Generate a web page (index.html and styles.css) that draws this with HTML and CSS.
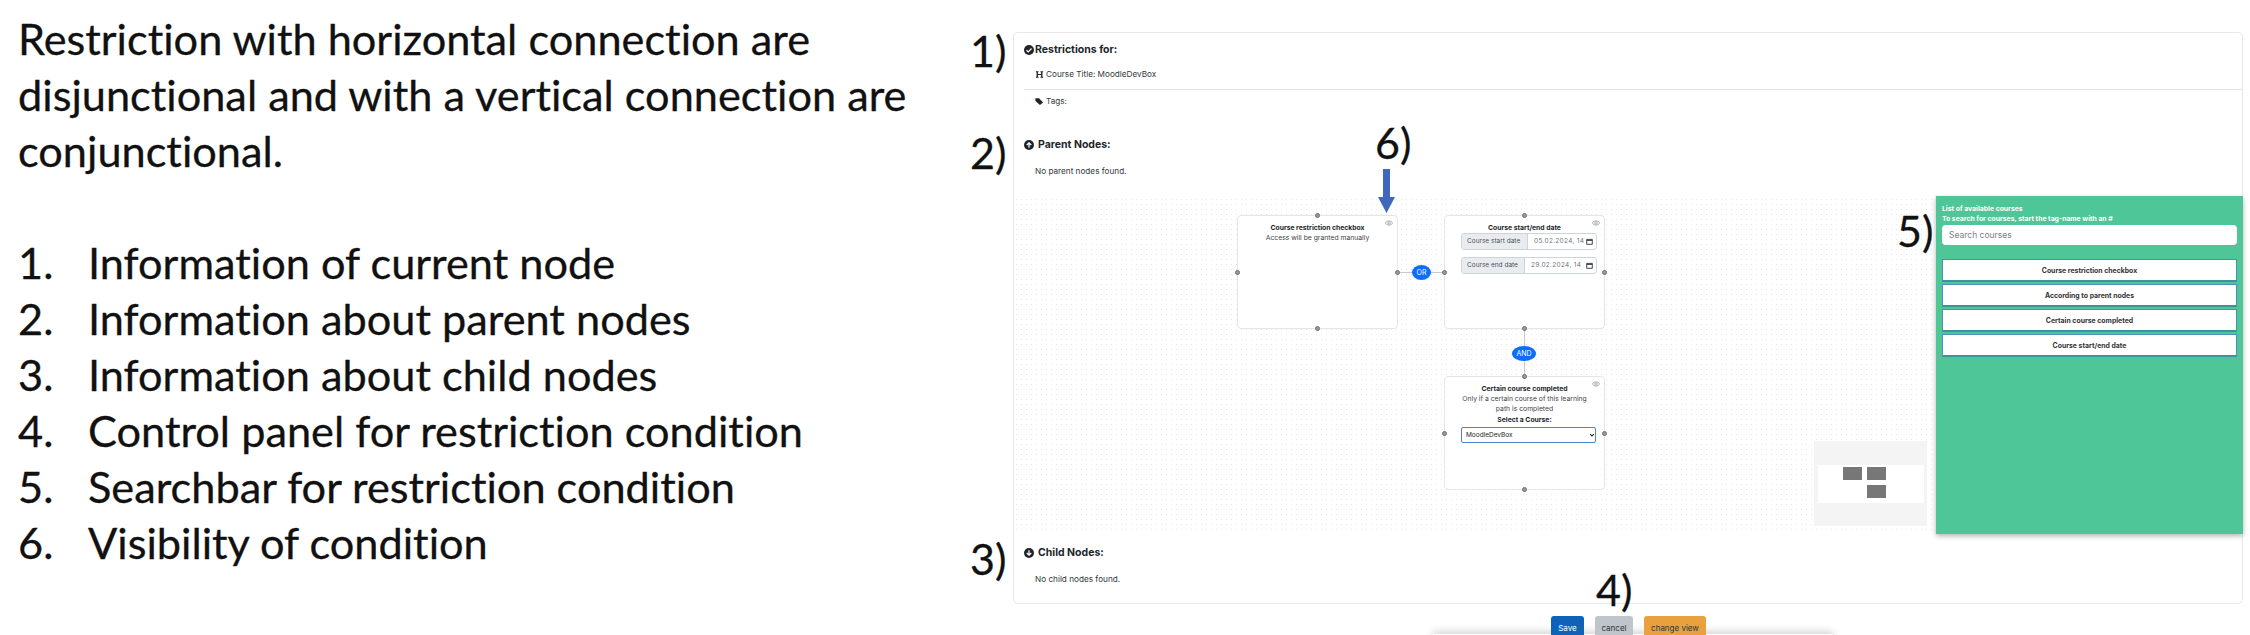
FILE: index.html
```html
<!DOCTYPE html>
<html lang="en">
<head>
    <meta charset="UTF-8">
    <meta name="viewport" content="width=device-width, initial-scale=1.0">
    <title>Restriction conditions</title>
    <link rel="stylesheet" href="styles.css">
</head>
<body>
    <div class="page">
        <section class="notes">
            <p>Restriction with horizontal connection are disjunctional and with a vertical connection are conjunctional.</p>
            <ol>
                <li>Information of current node</li>
                <li>Information about parent nodes</li>
                <li>Information about child nodes</li>
                <li>Control panel for restriction condition</li>
                <li>Searchbar for restriction condition</li>
                <li>Visibility of condition</li>
            </ol>
        </section>

        <section class="editor">
            <div class="card">
                <div class="info">
                    <h3 class="heading heading-tight">
                        <svg class="icon" viewBox="0 0 20 20"><circle cx="10" cy="10" r="10" fill="#212529"/><path d="M5 10.500l3.500 3.500L15 7" fill="none" stroke="#fff" stroke-width="2.400"/></svg>
                        Restrictions for:
                    </h3>
                    <div class="meta meta-line">
                        <svg class="icon-small" viewBox="0 0 20 20"><path d="M2 3h6v2H6.500v4h7V5H12V3h6v2h-1.500v10H18v2h-6v-2h1.500v-4h-7v4H8v2H2v-2h1.500V5H2z" fill="#212529"/></svg>
                        Course Title: MoodleDevBox
                    </div>
                    <div class="meta">
                        <svg class="icon-small" viewBox="0 0 20 20"><path d="M1 3h8l9 9-7 6-10-9z" fill="#212529"/></svg>
                        Tags:
                    </div>
                    <h3 class="heading heading-parent">
                        <svg class="icon" viewBox="0 0 20 20"><circle cx="10" cy="10" r="10" fill="#212529"/><path d="M10 15.500V6M5.500 10L10 5.500l4.500 4.500" fill="none" stroke="#fff" stroke-width="2.400"/></svg>
                        Parent Nodes:
                    </h3>
                    <p class="empty">No parent nodes found.</p>
                </div>

                <div class="canvas">
                    <div class="edge edge-h"></div>
                    <div class="edge edge-v"></div>
                    <span class="badge badge-or">OR</span>
                    <span class="badge badge-and">AND</span>

                    <div class="node node-checkbox">
                        <svg class="eye" viewBox="0 0 20 14"><path d="M1 7c3-7 15-7 18 0-3 7-15 7-18 0z" fill="none" stroke="#8b8b8b" stroke-width="1.600"/><circle cx="10" cy="7" r="3.200" fill="none" stroke="#8b8b8b" stroke-width="1.600"/></svg>
                        <strong>Course restriction checkbox</strong>
                        <span>Access will be granted manually</span>
                        <i class="handle handle-top"></i><i class="handle handle-left"></i><i class="handle handle-right"></i><i class="handle handle-bottom"></i>
                    </div>

                    <div class="node node-date">
                        <svg class="eye" viewBox="0 0 20 14"><path d="M1 7c3-7 15-7 18 0-3 7-15 7-18 0z" fill="none" stroke="#8b8b8b" stroke-width="1.600"/><circle cx="10" cy="7" r="3.200" fill="none" stroke="#8b8b8b" stroke-width="1.600"/></svg>
                        <strong>Course start/end date</strong>
                        <div class="date-group">
                            <span class="date-label">Course start date</span>
                            <span class="date-value">05.02.2024, 14</span>
                            <svg class="calendar" viewBox="0 0 10 10"><path d="M1 2h8v7H1zM1 3.500h8" fill="none" stroke="#212529" stroke-width="1.200"/></svg>
                        </div>
                        <div class="date-group">
                            <span class="date-label date-label-end">Course end date</span>
                            <span class="date-value">29.02.2024, 14</span>
                            <svg class="calendar" viewBox="0 0 10 10"><path d="M1 2h8v7H1zM1 3.500h8" fill="none" stroke="#212529" stroke-width="1.200"/></svg>
                        </div>
                        <i class="handle handle-top"></i><i class="handle handle-left"></i><i class="handle handle-right"></i><i class="handle handle-bottom"></i>
                    </div>

                    <div class="node node-course">
                        <svg class="eye" viewBox="0 0 20 14"><path d="M1 7c3-7 15-7 18 0-3 7-15 7-18 0z" fill="none" stroke="#8b8b8b" stroke-width="1.600"/><circle cx="10" cy="7" r="3.200" fill="none" stroke="#8b8b8b" stroke-width="1.600"/></svg>
                        <strong>Certain course completed</strong>
                        <span>Only if a certain course of this learning path is completed</span>
                        <strong class="select-title">Select a Course:</strong>
                        <div class="select-wrap">
                            <select class="course-select"><option>MoodleDevBox</option></select>
                            <svg class="chevron" viewBox="0 0 10 10"><path d="M2 3.500l3 3 3-3" fill="none" stroke="#212529" stroke-width="1.800"/></svg>
                        </div>
                        <i class="handle handle-top"></i><i class="handle handle-left"></i><i class="handle handle-right"></i><i class="handle handle-bottom"></i>
                    </div>

                    <svg class="minimap" viewBox="0 0 113 85">
                        <rect width="113" height="85" fill="#f4f4f4"/>
                        <rect x="4" y="24" width="106" height="38" fill="#fff"/>
                        <rect x="29" y="26" width="19" height="13" fill="#777"/>
                        <rect x="53" y="26" width="19" height="13" fill="#777"/>
                        <rect x="53" y="44" width="19" height="13" fill="#777"/>
                    </svg>

                    <aside class="sidebar">
                        <p class="sidebar-note">List of available courses<br>To search for courses, start the tag-name with an #</p>
                        <input class="search" type="text" placeholder="Search courses">
                        <div class="options">
                            <button class="option">Course restriction checkbox</button>
                            <button class="option">According to parent nodes</button>
                            <button class="option">Certain course completed</button>
                            <button class="option">Course start/end date</button>
                        </div>
                    </aside>
                </div>

                <div class="info">
                    <h3 class="heading heading-child">
                        <svg class="icon" viewBox="0 0 20 20"><circle cx="10" cy="10" r="10" fill="#212529"/><path d="M10 4.500V14M5.500 10l4.500 4.500 4.500-4.500" fill="none" stroke="#fff" stroke-width="2.400"/></svg>
                        Child Nodes:
                    </h3>
                    <p class="empty">No child nodes found.</p>
                </div>
            </div>

            <div class="controls">
                <button class="btn btn-save">Save</button>
                <button class="btn btn-cancel">cancel</button>
                <button class="btn btn-view">change view</button>
            </div>
            <div class="controls-shadow"></div>
        </section>

        <span class="mark mark-1">1)</span>
        <span class="mark mark-2">2)</span>
        <span class="mark mark-3">3)</span>
        <span class="mark mark-4">4)</span>
        <span class="mark mark-5">5)</span>
        <span class="mark mark-6">6)</span>
        <svg class="arrow" viewBox="0 0 17 44"><path d="M5 0h7v28h5l-8.500 16L0 28h5z" fill="#3f68bd"/></svg>
    </div>
</body>
</html>
```

FILE: styles.css
```css
html, body {
    margin: 0;
    height: 100%;
}
body {
    background-color: #fff;
    color: #212529;
    overflow: hidden;
}
.page {
    position: relative;
    display: flex;
    width: 2250px;
    height: 635px;
    overflow: hidden;
}

/* left text column */
.notes {
    width: 995px;
    flex-shrink: 0;
    padding: 10px 0 0 18px;
    box-sizing: border-box;
    font-family: 'Lato', sans-serif;
    font-size: 43.300px;
    font-variant-ligatures: none;
    -webkit-text-stroke: 0.300px #111;
    line-height: 56px;
    color: #111;
}
.notes p {
    margin: 0 0 56px;
    width: 900px;
}
.notes ol {
    margin: 0;
    padding: 0;
    list-style: none;
    counter-reset: item;
}
.notes li {
    display: flex;
    counter-increment: item;
}
.notes li::before {
    content: counter(item) ".";
    width: 70px;
    flex-shrink: 0;
}

/* editor */
.editor {
    position: relative;
    flex: 1;
    padding: 32px 7px 0 18px;
    font-family: 'Inter', sans-serif;
}
.card {
    height: 572px;
    box-sizing: border-box;
    border: 1px solid #e8e8e8;
    border-radius: 5px;
    display: flex;
    flex-direction: column;
}
.info {
    padding: 0 0 0 10px;
}
.heading {
    display: flex;
    align-items: center;
    gap: 4px;
    margin: 0;
    font-size: 10.500px;
    font-weight: 700;
    line-height: 14px;
}
.heading-tight {
    gap: 1px;
    padding-top: 10px;
}
.heading-parent {
    margin-top: 30px;
}
.heading-child {
    margin-top: 12px;
}
.icon {
    width: 10px;
    height: 10px;
}
.icon-small {
    width: 9px;
    height: 9px;
}
.meta {
    display: flex;
    align-items: center;
    gap: 2px;
    padding-left: 11px;
    font-size: 8.200px;
    line-height: 13px;
    color: #343a40;
}
.meta-line {
    margin-top: 11px;
    padding-bottom: 8px;
    border-bottom: 1px solid #e4e4e4;
    margin-bottom: 5px;
}
.empty {
    margin: 13px 0 0 11px;
    font-size: 8.200px;
    line-height: 13px;
    color: #343a40;
}

/* flow canvas */
.canvas {
    position: relative;
    height: 337px;
    margin-top: 19px;
    background-image: radial-gradient(#e8e8e8 0.8px, transparent 0.8px);
    background-size: 5px 5px;
}
.node {
    position: absolute;
    width: 161px;
    height: 114px;
    box-sizing: border-box;
    padding: 7px 14px 0;
    background-color: #fff;
    border: 1px solid #e6e6e6;
    border-radius: 4px;
    font-size: 6.800px;
    line-height: 10px;
    text-align: center;
    color: #444;
}
.node strong {
    display: block;
    color: #212529;
    font-weight: 700;
}
.node-checkbox {
    left: 223px;
    top: 18px;
}
.node-date {
    left: 430px;
    top: 18px;
}
.node-course {
    left: 430px;
    top: 179px;
}
.select-title {
    margin-top: 1px;
}
.eye {
    position: absolute;
    top: 4px;
    right: 4px;
    width: 8px;
    height: 6px;
}
.handle {
    position: absolute;
    width: 3px;
    height: 3px;
    background-color: #999;
    border: 1px solid #6f6f6f;
    border-radius: 50%;
}
.handle-top {
    top: -3px;
    left: 77px;
}
.handle-bottom {
    bottom: -3px;
    left: 77px;
}
.handle-left {
    top: 54px;
    left: -3px;
}
.handle-right {
    top: 54px;
    right: -3px;
}
.edge {
    position: absolute;
    background-color: #c8c8c8;
}
.edge-h {
    left: 384px;
    top: 75px;
    width: 47px;
    height: 1px;
}
.edge-v {
    left: 510px;
    top: 132px;
    width: 1px;
    height: 47px;
}
.badge {
    position: absolute;
    z-index: 1;
    height: 15px;
    border-radius: 50%;
    background-color: #0d6efd;
    color: #fff;
    font-size: 7px;
    line-height: 15px;
    text-align: center;
}
.badge-or {
    left: 398px;
    top: 68px;
    width: 19px;
}
.badge-and {
    left: 498px;
    top: 149px;
    width: 24px;
}
.date-group {
    position: relative;
    display: flex;
    height: 17px;
    width: 136px;
    box-sizing: border-box;
    margin: 0 0 7px 2px;
    border: 1px solid #ced4da;
    border-radius: 3px;
    font-size: 6.500px;
    line-height: 15px;
    color: #6c757d;
    background-color: #fff;
    overflow: hidden;
}
.date-label {
    width: 66px;
    box-sizing: border-box;
    flex-shrink: 0;
    padding-left: 5px;
    text-align: left;
    white-space: nowrap;
    background-color: #e9ecef;
    border-right: 1px solid #ced4da;
    color: #495057;
}
.date-label-end {
    width: 63px;
}
.date-value {
    flex: 1;
    padding: 0 11px 0 6px;
    text-align: left;
    white-space: nowrap;
    overflow: hidden;
    letter-spacing: 0.300px;
}
.calendar {
    position: absolute;
    top: 4px;
    right: 3px;
    width: 7px;
    height: 7px;
}
.select-wrap {
    position: relative;
    width: 135px;
    margin: 2px 0 0 2px;
}
.course-select {
    display: block;
    width: 100%;
    height: 16px;
    padding: 0 0 0 4px;
    appearance: none;
    border: 1px solid #4a86c8;
    border-radius: 2px;
    background-color: #fff;
    font-family: 'Inter', sans-serif;
    font-size: 6.500px;
    color: #212529;
}
.chevron {
    position: absolute;
    top: 5px;
    right: 1px;
    width: 6px;
    height: 6px;
}
.minimap {
    position: absolute;
    left: 800px;
    top: 244px;
    width: 113px;
    height: 85px;
}

/* green sidebar */
.sidebar {
    position: absolute;
    right: -1px;
    top: -1px;
    width: 307px;
    height: 338px;
    box-sizing: border-box;
    padding: 8px 6px 0;
    background-color: #4fc697;
    box-shadow: 0 2px 5px rgba(0, 0, 0, 0.3);
}
.sidebar-note {
    margin: 0;
    font-size: 6.850px;
    font-weight: 700;
    line-height: 10px;
    color: #fff;
}
.search {
    display: block;
    width: 100%;
    height: 20px;
    box-sizing: border-box;
    margin-top: 1px;
    padding: 0 7px;
    border: none;
    border-radius: 4px;
    font-family: 'Inter', sans-serif;
    font-size: 8.500px;
}
.search::placeholder {
    color: #7b8188;
}
.options {
    display: flex;
    flex-direction: column;
    gap: 2px;
    margin-top: 14px;
}
.option {
    height: 23px;
    padding: 0;
    background-color: #fff;
    border: 1px solid #4a8fc0;
    border-bottom: 2px solid #3a93a0;
    border-radius: 1px;
    font-family: 'Inter', sans-serif;
    font-size: 6.900px;
    font-weight: 700;
    color: #333;
}

/* bottom controls */
.controls {
    display: flex;
    gap: 11px;
    margin-top: 12px;
    padding-left: 538px;
}
.btn {
    height: 24px;
    padding: 0;
    border: none;
    border-radius: 3px;
    font-family: 'Inter', sans-serif;
    font-size: 8px;
}
.btn-save {
    width: 33px;
    background-color: #0f62b8;
    color: #fff;
}
.btn-cancel {
    width: 38px;
    background-color: #c0c5cc;
    color: #333;
}
.btn-view {
    width: 62px;
    background-color: #e9a13f;
    color: #333;
}
.controls-shadow {
    position: absolute;
    left: 438px;
    top: 634px;
    width: 400px;
    height: 10px;
    z-index: -1;
    box-shadow: 0 -2px 8px rgba(0, 0, 0, 0.2);
}

/* numbered marks laid over the screenshot */
.mark {
    position: absolute;
    font-family: 'Lato', sans-serif;
    font-size: 43px;
    -webkit-text-stroke: 0.300px #111;
    line-height: 50px;
    color: #111;
}
.mark-1 { left: 970px; top: 26px; }
.mark-2 { left: 970px; top: 128px; }
.mark-3 { left: 970px; top: 534px; }
.mark-4 { left: 1596px; top: 565px; }
.mark-5 { left: 1897px; top: 206px; }
.mark-6 { left: 1375px; top: 118px; }
.arrow {
    position: absolute;
    left: 1378px;
    top: 169px;
    width: 17px;
    height: 44px;
}
```
